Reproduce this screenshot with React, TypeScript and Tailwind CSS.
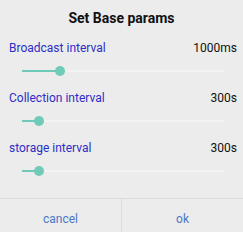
import React from 'react';

const params = [
  { label: 'Broadcast interval', value: '1000ms', pos: 38 },
  { label: 'Collection interval', value: '300s', pos: 17 },
  { label: 'storage interval', value: '300s', pos: 17 },
];

function Slider({ pos }: { pos: number }) {
  return (
    <div className="relative h-[25px] ml-[22px] mr-[18px]">
      {/* track */}
      <div className="absolute left-0 right-0 top-[10px] h-[2px] bg-[#f2f2f2]" />
      <div className="absolute left-0 top-[10px] h-[2px] bg-[#6fcab8]" style={{ width: pos }} />
      <div
        className="absolute top-[6px] w-[10px] h-[10px] rounded-full bg-[#6fcab8]"
        style={{ left: pos - 5 }}
      />
    </div>
  );
}

export default function App() {
  return (
    <div
      className="w-[243px] h-[232px] overflow-hidden bg-[#ececec] flex flex-col"
      style={{ fontFamily: 'Roboto, "Liberation Sans", sans-serif' }}
    >
      {/* 标题 */}
      <div className="h-[35px] flex items-center justify-center pt-[2px] text-[14px] font-bold text-[#111]">
        Set Base params
      </div>

      {params.map((p) => (
        <div key={p.label} className="h-[50px] flex flex-col">
          <div className="h-[25px] flex items-center justify-between pl-[9px] pr-[6px] text-[12px]">
            <span className="text-[#2d2dc8]">{p.label}</span>
            <span className="text-[#111]">{p.value}</span>
          </div>
          <Slider pos={p.pos} />
        </div>
      ))}

      <div className="h-[13px]" />

      {/* 按钮 */}
      <div className="flex-1 flex border-t border-[#dcdcdc]">
        <div className="flex-1 flex items-center justify-center pt-[7px] text-[12px] text-[#4a78c8] border-r border-[#dcdcdc]">
          cancel
        </div>
        <div className="flex-1 flex items-center justify-center pt-[7px] text-[12px] text-[#4a78c8]">
          ok
        </div>
      </div>
    </div>
  );
}
